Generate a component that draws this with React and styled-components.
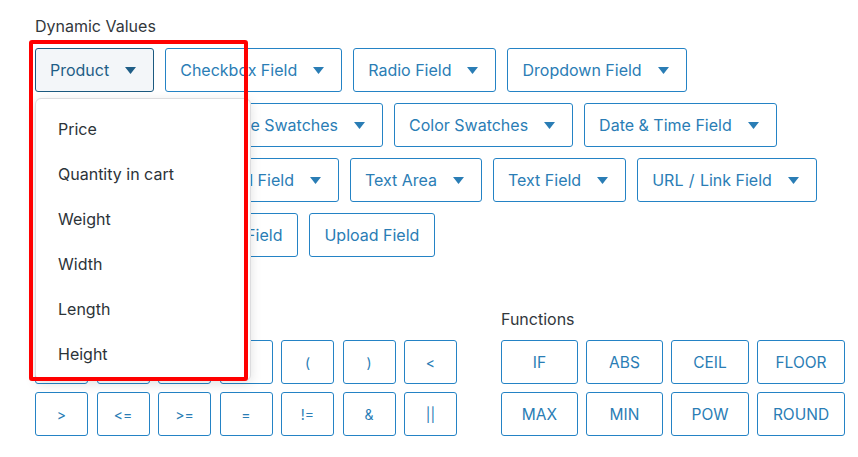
import React from 'react';
import styled, { createGlobalStyle } from 'styled-components';

const GlobalStyle = createGlobalStyle`
  body {
    margin: 0;
    background: #ffffff;
    font-family: Inter, "Noto Sans", sans-serif;
  }
`;

const Page = styled.div`
  position: relative;
  width: 858px;
  height: 457px;
  box-sizing: border-box;
  padding: 16px 0 0 35px;
  background: #ffffff;
`;

const Label = styled.div`
  font-size: 16px;
  line-height: 20px;
  color: #32373c;
  margin-bottom: 12px;
`;

const FieldWrap = styled.div`
  display: flex;
  flex-wrap: wrap;
  gap: 11px;
  width: 800px;
`;

const Anchor = styled.div`
  position: relative;
`;

const FieldButton = styled.button`
  display: flex;
  align-items: center;
  gap: 16px;
  height: 44px;
  box-sizing: border-box;
  padding: 0 ${({ $caret }) => ($caret ? '17px' : '15px')} 0 14px;
  border: 1px solid ${({ $active }) => ($active ? '#1c5a80' : '#2483c5')};
  border-radius: 3px;
  background: ${({ $active }) => ($active ? '#f3f6f9' : '#ffffff')};
  color: ${({ $active }) => ($active ? '#1f5e87' : '#2a7db5')};
  font-family: Inter, "Noto Sans", sans-serif;
  font-size: 16px;
  white-space: pre;
  cursor: pointer;
`;

const Caret = styled.svg`
  width: 11px;
  height: 7px;
  fill: currentColor;
`;

const Menu = styled.div`
  position: absolute;
  top: 50px;
  left: 0;
  width: 216px;
  height: 283px;
  box-sizing: border-box;
  padding-top: 7px;
  background: #ffffff;
  border: 1px solid #dcdcde;
  border-radius: 6px;
  box-shadow: 0 3px 12px rgba(0, 0, 0, 0.12);
  z-index: 2;
`;

const MenuItem = styled.div`
  height: 45px;
  display: flex;
  align-items: center;
  padding-left: 22px;
  font-size: 16px;
  color: #2c3338;
`;

const Highlight = styled.div`
  position: absolute;
  left: 29px;
  top: 40px;
  width: 219px;
  height: 341px;
  box-sizing: border-box;
  border: 4px solid #ff0000;
  border-radius: 3px;
  z-index: 3;
  pointer-events: none;
`;

const Bottom = styled.div`
  display: flex;
  gap: 44px;
  margin-top: 52px;
`;

const Group = styled.div`
  display: flex;
  flex-direction: column;
`;

const GroupLabel = styled(Label)`
  margin-bottom: 11px;
`;

const KeyGrid = styled.div`
  display: grid;
  grid-template-columns: ${({ $cols }) => $cols};
  column-gap: ${({ $gap }) => $gap};
  row-gap: 8px;
`;

const Key = styled.button`
  height: 44px;
  box-sizing: border-box;
  border: 1px solid #2483c5;
  border-radius: 3px;
  background: #ffffff;
  color: #2a7db5;
  font-family: Inter, "Noto Sans", sans-serif;
  font-size: ${({ $small }) => ($small ? '14px' : '15.5px')};
  padding: 0;
  cursor: pointer;
`;

const fields = [
  { label: 'Product', caret: true, active: true },
  { label: 'Checkbox Field', caret: true },
  { label: 'Radio Field', caret: true },
  { label: 'Dropdown Field', caret: true },
  { label: 'Color Picker', caret: true },
  { label: 'Image Swatches', caret: true },
  { label: 'Color Swatches', caret: true },
  { label: 'Date & Time Field', caret: true },
  { label: 'Switch Field', caret: true },
  { label: 'Email Field', caret: true },
  { label: 'Text Area', caret: true },
  { label: 'Text Field', caret: true },
  { label: 'URL\u2004/\u2004Link Field', caret: true },
  { label: 'Range Slider' },
  { label: 'Hidden Field' },
  { label: 'Upload Field' },
];

const productItems = ['Price', 'Quantity in cart', 'Weight', 'Width', 'Length', 'Height'];

const operators = ['+', '-', '*', '/', '(', ')', '<', '>', '<=', '>=', '=', '!=', '&', '||'];
const functions = ['IF', 'ABS', 'CEIL', 'FLOOR', 'MAX', 'MIN', 'POW', 'ROUND'];

const CaretIcon = () => (
  <Caret viewBox="0 0 11 7">
    <path d="M0 0h11L5.5 7z" />
  </Caret>
);

const App = () => (
  <>
    <GlobalStyle />
    <Page>
      <Label>Dynamic Values</Label>
      <FieldWrap>
        {fields.map((f) =>
          f.active ? (
            <Anchor key={f.label}>
              <FieldButton $active $caret>
                {f.label}
                <CaretIcon />
              </FieldButton>
              <Menu>
                {productItems.map((item) => (
                  <MenuItem key={item}>{item}</MenuItem>
                ))}
              </Menu>
            </Anchor>
          ) : (
            <FieldButton key={f.label} $caret={f.caret}>
              {f.label}
              {f.caret && <CaretIcon />}
            </FieldButton>
          )
        )}
      </FieldWrap>

      <Bottom>
        <Group>
          <GroupLabel>Operators</GroupLabel>
          <KeyGrid $cols="repeat(7, 53px)" $gap="8.5px">
            {operators.map((op) => (
              <Key key={op} $small>
                {op}
              </Key>
            ))}
          </KeyGrid>
        </Group>
        <Group>
          <GroupLabel>Functions</GroupLabel>
          <KeyGrid $cols="77px 77px 78px 88px" $gap="8px">
            {functions.map((fn) => (
              <Key key={fn}>{fn}</Key>
            ))}
          </KeyGrid>
        </Group>
      </Bottom>
      <Highlight />
    </Page>
  </>
);

export default App;
